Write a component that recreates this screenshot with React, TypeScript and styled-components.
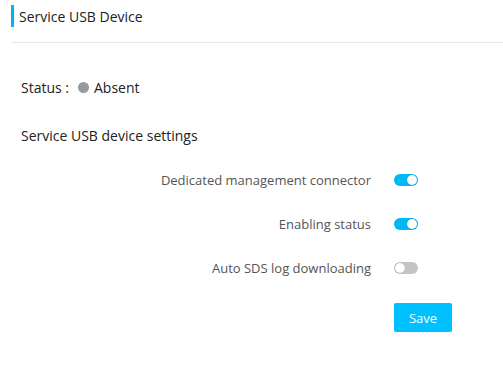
import React, { useState } from "react";
import styled, { createGlobalStyle } from "styled-components";

const Global = createGlobalStyle`
  html, body { margin: 0; padding: 0; background: #fff; }
  body { font-family: "Open Sans", "Noto Sans", sans-serif; color: #333; }
  * { box-sizing: border-box; }
`;

const Page = styled.div`
  width: 503px;
  height: 369px;
  padding: 0 0 0 11px;
`;

const Header = styled.div`
  height: 43px;
  padding-top: 5px;
  border-bottom: 1px solid #e6e6e6;
`;

const Title = styled.h1`
  margin: 0;
  height: 22px;
  display: flex;
  align-items: center;
  border-left: 3px solid #00b4f0;
  padding-left: 5px;
  font-size: 14px;
  font-weight: 400;
  color: #222;
`;

const Body = styled.div`
  padding: 0 0 0 10px;
`;

const StatusLine = styled.div`
  margin-top: 34px;
  display: flex;
  align-items: center;
  font-size: 14px;
  color: #222;
  height: 20px;
`;

const Dot = styled.span<{ $color: string }>`
  display: inline-block;
  width: 11px;
  height: 11px;
  border-radius: 50%;
  background: ${(p) => p.$color};
  margin: 0 5px 0 9px;
`;

const SectionTitle = styled.div`
  margin-top: 29px;
  font-size: 14px;
  color: #222;
  height: 20px;
  line-height: 20px;
`;

const Rows = styled.div`
  margin-top: 25px;
  display: flex;
  flex-direction: column;
  gap: 26px;
  width: 432px;
`;

const Row = styled.div`
  display: grid;
  grid-template-columns: 350px 1fr;
  column-gap: 23px;
  align-items: center;
  height: 18px;
`;

const Label = styled.span`
  text-align: right;
  font-size: 13px;
  color: #555;
`;

const Track = styled.button<{ $on: boolean }>`
  position: relative;
  width: 24px;
  height: 12px;
  padding: 0;
  border: none;
  border-radius: 6px;
  background: ${(p) => (p.$on ? "#00b8f5" : "#c4c4c4")};
  cursor: pointer;
`;

const Knob = styled.span<{ $on: boolean }>`
  position: absolute;
  top: 1px;
  left: ${(p) => (p.$on ? "13px" : "1px")};
  width: 10px;
  height: 10px;
  border-radius: 50%;
  background: #fff;
  box-shadow: 0 0 1px rgba(0, 0, 0, 0.35);
`;

const Actions = styled.div`
  margin-top: 26px;
  padding-left: 373px;
`;

const SaveButton = styled.button`
  width: 58px;
  height: 29px;
  border: none;
  border-radius: 2px;
  background: #00c1ff;
  color: #fff;
  font-family: inherit;
  font-size: 13px;
  cursor: pointer;
`;

function Toggle({ on, onClick }: { on: boolean; onClick: () => void }) {
  return (
    <Track $on={on} onClick={onClick} aria-pressed={on}>
      <Knob $on={on} />
    </Track>
  );
}

export default function App() {
  const [settings, setSettings] = useState([
    { label: "Dedicated management connector", on: true },
    { label: "Enabling status", on: true },
    { label: "Auto SDS log downloading", on: false },
  ]);
  return (
    <>
      <Global />
      <Page>
        <Header>
          <Title>Service USB Device</Title>
        </Header>
        <Body>
          <StatusLine>
            Status :<Dot $color="#9a9a9a" />Absent
          </StatusLine>
          <SectionTitle>Service USB device settings</SectionTitle>
          <Rows>
            {settings.map((s, i) => (
              <Row key={s.label}>
                <Label>{s.label}</Label>
                <Toggle
                  on={s.on}
                  onClick={() =>
                    setSettings((prev) =>
                      prev.map((p, j) => (j === i ? { ...p, on: !p.on } : p))
                    )
                  }
                />
              </Row>
            ))}
          </Rows>
          <Actions>
            <SaveButton>Save</SaveButton>
          </Actions>
        </Body>
      </Page>
    </>
  );
}
